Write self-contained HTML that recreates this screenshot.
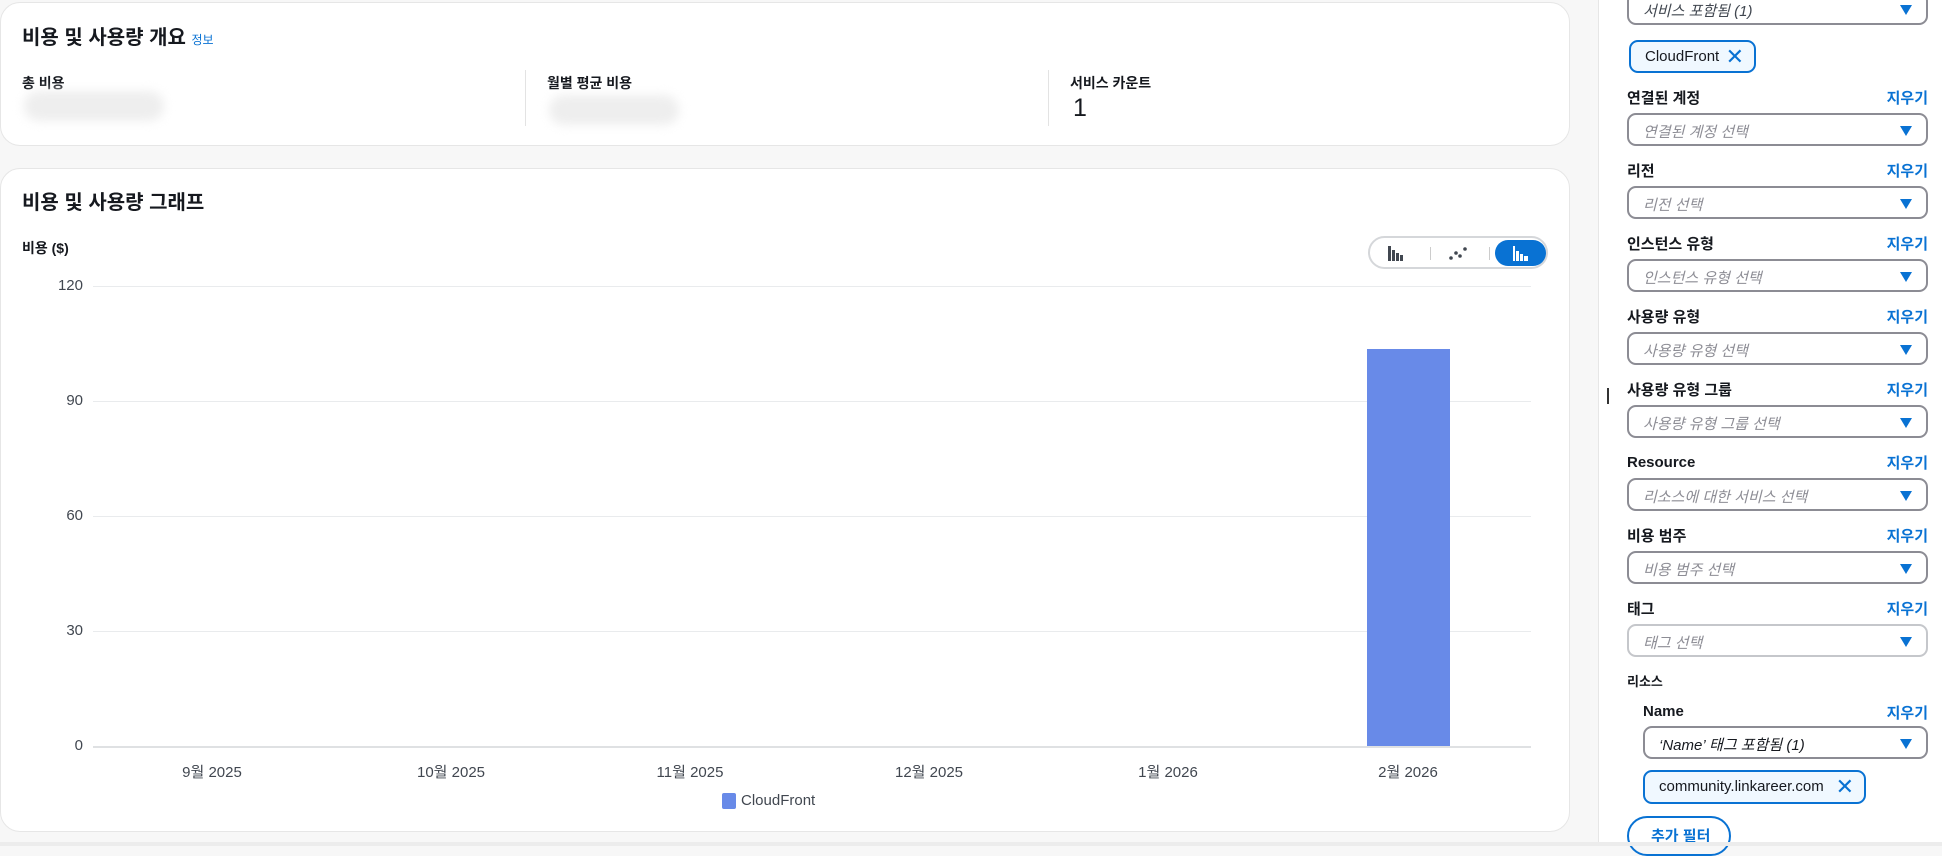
<!DOCTYPE html>
<html><head><meta charset="utf-8"><style>
*{box-sizing:border-box;margin:0;padding:0}
body{width:1942px;height:846px;overflow:hidden;background:#f7f7f7;font-family:"Liberation Sans","Noto Sans CJK KR",sans-serif;color:#16191f;position:relative}
.a{position:absolute}
.card{position:absolute;background:#fff;border:1px solid #e6e6e6;border-radius:20px}
.lbl{position:absolute;font-weight:bold;font-size:15px;left:1627px}
.clr{position:absolute;right:14px;color:#0972d3;font-weight:bold;font-size:15px}
.dd{position:absolute;left:1627px;width:301px;height:33px;border:2px solid #8c8c94;border-radius:9px;background:#fff;font-style:italic;font-size:15px;color:#8d8d95;padding:6px 0 0 14px}
.dd:after{content:"";position:absolute;right:14px;top:11px;border-left:6px solid transparent;border-right:6px solid transparent;border-top:10px solid #0972d3}
.tok{position:absolute;background:#f0f8ff;border:2px solid #0972d3;border-radius:9px;font-size:15px;color:#16191f;padding:6px 0 0 14px}
.tok b{position:absolute;right:10px;top:2px;color:#0972d3;font-weight:normal;font-size:22px}
.yl{position:absolute;right:1859px;font-size:15px;color:#414750}
.gl{position:absolute;left:93px;width:1438px;height:1px;background:#e9ebed}
.xl{position:absolute;top:761px;font-size:15px;color:#414750;width:120px;text-align:center}
</style></head><body>
<div class="card" style="left:0;top:2px;width:1570px;height:144px"></div>
<div class="a" style="left:22px;top:21px;font-size:20px;font-weight:bold">비용 및 사용량 개요 <span style="font-size:12px;color:#0972d3;font-weight:normal">정보</span></div>
<div class="a" style="left:22px;top:73px;font-size:14px;font-weight:bold">총 비용</div>
<div class="a" style="left:24px;top:91px;width:140px;height:30px;border-radius:15px;background:#eee;filter:blur(5px)"></div>
<div class="a" style="left:525px;top:70px;width:1px;height:56px;background:#e3e3e3"></div>
<div class="a" style="left:547px;top:73px;font-size:14px;font-weight:bold">월별 평균 비용</div>
<div class="a" style="left:549px;top:95px;width:130px;height:30px;border-radius:15px;background:#eee;filter:blur(5px)"></div>
<div class="a" style="left:1048px;top:70px;width:1px;height:56px;background:#e3e3e3"></div>
<div class="a" style="left:1070px;top:73px;font-size:14px;font-weight:bold">서비스 카운트</div>
<div class="a" style="left:1073px;top:94px;font-size:25px">1</div>

<div class="card" style="left:0;top:168px;width:1570px;height:664px"></div>
<div class="a" style="left:22px;top:186px;font-size:20px;font-weight:bold">비용 및 사용량 그래프</div>
<div class="a" style="left:22px;top:238px;font-size:14px;font-weight:bold">비용 ($)</div>
<div class="a" style="left:1368px;top:236px;width:180px;height:33px;border:2px solid #d5d7da;border-radius:17px;background:#fff"></div>
<svg class="a" style="left:1386px;top:243px" width="20" height="20"><g fill="#414750"><rect x="2" y="3" width="3" height="15"/><rect x="6" y="7" width="3" height="11"/><rect x="10" y="10" width="3" height="8"/><rect x="14" y="12" width="3" height="6"/></g></svg>
<div class="a" style="left:1430px;top:247px;width:1px;height:13px;background:#ccc"></div>
<svg class="a" style="left:1448px;top:243px" width="20" height="20"><g fill="#414750"><circle cx="3" cy="15" r="1.8"/><circle cx="8" cy="10" r="1.8"/><circle cx="12" cy="13" r="1.8"/><circle cx="17" cy="6" r="1.8"/></g></svg>
<div class="a" style="left:1489px;top:247px;width:1px;height:13px;background:#ccc"></div>
<div class="a" style="left:1495px;top:240px;width:51px;height:26px;border-radius:13px;background:#0972d3"></div>
<svg class="a" style="left:1511px;top:243px" width="20" height="20"><g fill="#fff"><rect x="2" y="3" width="2" height="15"/><rect x="5" y="8" width="3" height="10"/><rect x="9" y="11" width="3" height="7"/><rect x="13" y="13" width="4" height="5"/></g></svg>

<div class="gl" style="top:286px"></div><div class="yl" style="top:277px">120</div>
<div class="gl" style="top:401px"></div><div class="yl" style="top:392px">90</div>
<div class="gl" style="top:516px"></div><div class="yl" style="top:507px">60</div>
<div class="gl" style="top:631px"></div><div class="yl" style="top:622px">30</div>
<div class="gl" style="top:746px;height:2px;background:#dfe1e3"></div><div class="yl" style="top:737px">0</div>
<div class="a" style="left:1367px;top:349px;width:83px;height:397px;background:#688ae8"></div>
<div class="xl" style="left:152px">9월 2025</div>
<div class="xl" style="left:391px">10월 2025</div>
<div class="xl" style="left:630px">11월 2025</div>
<div class="xl" style="left:869px">12월 2025</div>
<div class="xl" style="left:1108px">1월 2026</div>
<div class="xl" style="left:1348px">2월 2026</div>
<div class="a" style="left:722px;top:793px;width:14px;height:16px;border-radius:2px;background:#688ae8"></div>
<div class="a" style="left:741px;top:792px;font-size:15px;color:#414750">CloudFront</div>

<div class="a" style="left:1598px;top:0;width:1px;height:846px;background:#e6e6e6"></div>
<div class="a" style="left:1599px;top:0;width:343px;height:846px;background:#fff"></div>
<div class="a" style="left:1607px;top:388px;width:2px;height:16px;background:#333"></div>

<div class="dd" style="top:-8px;color:#414750">서비스 포함됨 (1)</div>
<div class="tok" style="left:1629px;top:40px;width:127px;height:33px">CloudFront<b>✕</b></div>

<div class="lbl" style="top:87px">연결된 계정</div><div class="clr" style="top:87px">지우기</div>
<div class="dd" style="top:113px">연결된 계정 선택</div>
<div class="lbl" style="top:160px">리전</div><div class="clr" style="top:160px">지우기</div>
<div class="dd" style="top:186px">리전 선택</div>
<div class="lbl" style="top:233px">인스턴스 유형</div><div class="clr" style="top:233px">지우기</div>
<div class="dd" style="top:259px">인스턴스 유형 선택</div>
<div class="lbl" style="top:306px">사용량 유형</div><div class="clr" style="top:306px">지우기</div>
<div class="dd" style="top:332px">사용량 유형 선택</div>
<div class="lbl" style="top:379px">사용량 유형 그룹</div><div class="clr" style="top:379px">지우기</div>
<div class="dd" style="top:405px">사용량 유형 그룹 선택</div>
<div class="lbl" style="top:454px">Resource</div><div class="clr" style="top:452px">지우기</div>
<div class="dd" style="top:478px">리소스에 대한 서비스 선택</div>
<div class="lbl" style="top:525px">비용 범주</div><div class="clr" style="top:525px">지우기</div>
<div class="dd" style="top:551px">비용 범주 선택</div>
<div class="lbl" style="top:598px">태그</div><div class="clr" style="top:598px">지우기</div>
<div class="dd" style="top:624px;border-color:#c5c7cb">태그 선택</div>
<div class="lbl" style="top:671px;font-size:13px">리소스</div>
<div class="lbl" style="top:703px;left:1643px">Name</div><div class="clr" style="top:702px">지우기</div>
<div class="dd" style="top:726px;left:1643px;width:285px;color:#16191f">‘Name’ 태그 포함됨 (1)</div>
<div class="tok" style="left:1643px;top:770px;width:223px;height:34px">community.linkareer.com<b>✕</b></div>
<div class="a" style="left:1627px;top:816px;width:104px;height:40px;border:2px solid #0972d3;border-radius:20px;color:#0972d3;font-weight:bold;font-size:15px;padding:7px 0 0 22px">추가 필터</div>
<div class="a" style="left:0;top:842px;width:1942px;height:4px;background:#ececec"></div>
</body></html>
